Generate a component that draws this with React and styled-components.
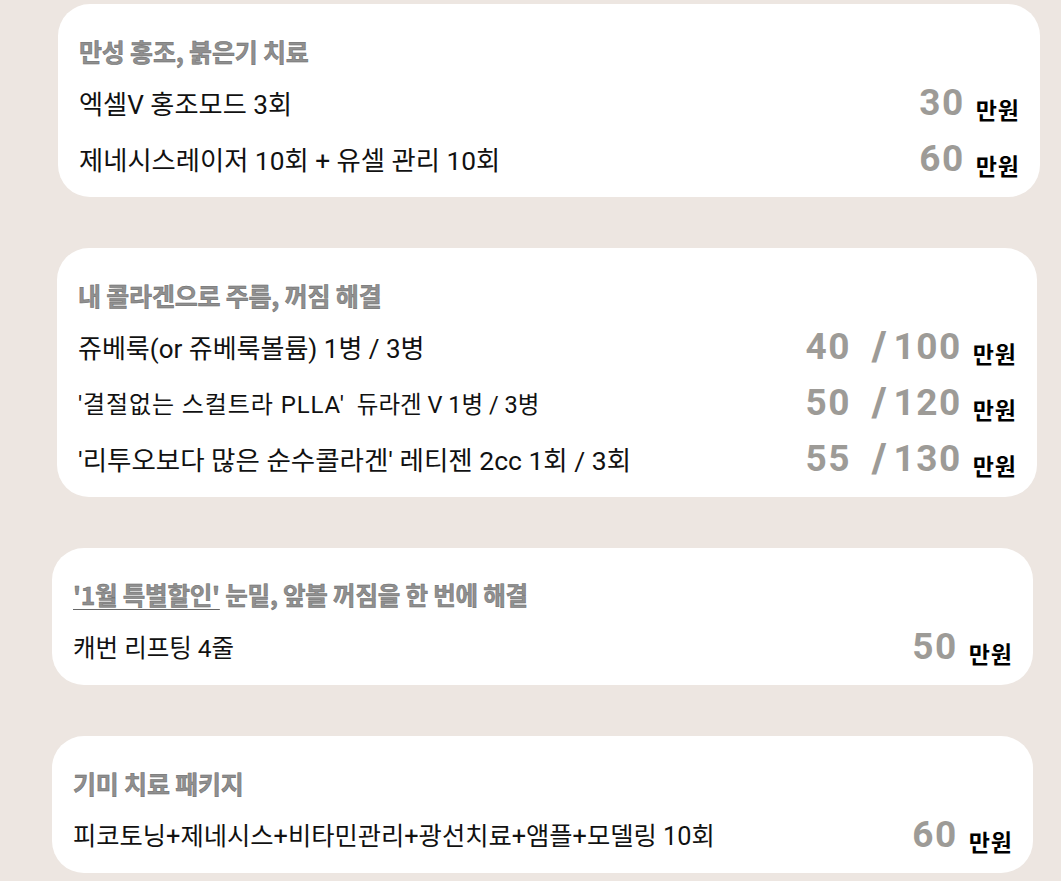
import styled, { createGlobalStyle } from "styled-components";

const GlobalStyle = createGlobalStyle`
  html, body {
    margin: 0;
    padding: 0;
    background: #ede6e1;
  }
  body {
    font-family: Roboto, "Noto Sans CJK KR", sans-serif;
  }
`;

const menus = [
  {
    title: "만성 홍조, 붉은기 치료",
    titleSize: 25,
    indent: 6,
    width: 982,
    items: [
      { name: "엑셀V 홍조모드 3회", size: 26.2, price: ["30"] },
      { name: "제네시스레이저 10회 + 유셀 관리 10회", size: 26.3, price: ["60"] },
    ],
  },
  {
    title: "내 콜라겐으로 주름, 꺼짐 해결",
    titleSize: 25,
    indent: 5,
    width: 980,
    items: [
      { name: "쥬베룩(or 쥬베룩볼륨) 1병 / 3병", size: 26, price: ["40", "100"] },
      { note: "'결절없는 스컬트라 PLLA'", name: "듀라겐 V 1병 / 3병", size: 23.5, price: ["50", "120"] },
      { name: "'리투오보다 많은 순수콜라겐' 레티젠 2cc 1회 / 3회", size: 26.5, price: ["55", "130"] },
    ],
  },
  {
    badge: "'1월 특별할인'",
    title: "눈밑, 앞볼 꺼짐을 한 번에 해결",
    titleSize: 24.5,
    indent: 0,
    width: 981,
    items: [{ name: "캐번 리프팅 4줄", size: 24.5, price: ["50"] }],
  },
  {
    title: "기미 치료 패키지",
    titleSize: 25,
    indent: 0,
    width: 981,
    items: [{ name: "피코토닝+제네시스+비타민관리+광선치료+앰플+모델링 10회", size: 25.3, price: ["60"] }],
  },
];

const App = () => {
  return (
    <>
      <GlobalStyle />
      <Page>
        {menus.map((menu, i) => (
          <Card key={i} $indent={menu.indent} $width={menu.width}>
            <Title $size={menu.titleSize}>
              {menu.badge && <Badge>{menu.badge}</Badge>}
              {menu.badge && " "}
              {menu.title}
            </Title>
            {menu.items.map((item, j) => (
              <Row key={j}>
                <ItemName>
                  {item.note && <Note>{item.note}</Note>}
                  <NameText $size={item.size}>{item.name}</NameText>
                </ItemName>
                <Price>
                  <Num>{item.price[0]}</Num>
                  {item.price[1] && (
                    <>
                      <Slash>/</Slash>
                      <Num>{item.price[1]}</Num>
                    </>
                  )}
                  <Unit>만원</Unit>
                </Price>
              </Row>
            ))}
          </Card>
        ))}
      </Page>
    </>
  );
};

export default App;

const Page = styled.div`
  display: flex;
  flex-direction: column;
  gap: 51px;
  padding: 4px 0 0 52px;
  width: 990px;
`;

const Card = styled.div`
  display: flex;
  flex-direction: column;
  box-sizing: border-box;
  width: ${(p) => p.$width}px;
  margin-left: ${(p) => p.$indent}px;
  padding: 21px 20px 8px 21px;
  background: #ffffff;
  border-radius: 32px;
`;

const Title = styled.div`
  height: 52px;
  line-height: 52px;
  font-family: "Noto Sans CJK KR", sans-serif;
  font-size: ${(p) => p.$size}px;
  font-weight: 700;
  letter-spacing: -0.2px;
  color: #909090;
  -webkit-text-stroke: 0.5px #686868;
  white-space: nowrap;
`;

const Badge = styled.span`
  text-decoration: underline;
  text-decoration-thickness: 1px;
  text-underline-offset: 4px;
`;

const Row = styled.div`
  display: flex;
  justify-content: space-between;
  align-items: flex-start;
  height: 56px;
`;

const ItemName = styled.div`
  display: flex;
  align-items: baseline;
  line-height: 56px;
  color: #111111;
  white-space: pre;
`;

const NameText = styled.span`
  font-family: Roboto, "Noto Sans CJK KR", sans-serif;
  font-size: ${(p) => p.$size}px;
`;

const Note = styled.span`
  font-family: Roboto, "Noto Sans CJK KR", sans-serif;
  font-size: 24px;
  letter-spacing: 0.9px;
  margin-right: 12px;
`;

const Price = styled.div`
  display: flex;
  align-items: flex-start;
`;

const Num = styled.span`
  font-family: Roboto, sans-serif;
  font-size: 37px;
  line-height: 51px;
  font-weight: 700;
  letter-spacing: 1.5px;
  color: #9d9b97;
`;

const Slash = styled(Num)`
  font-size: 41px;
  font-weight: 900;
  letter-spacing: 0;
  margin: 0 7px 0 21px;
`;

const Unit = styled.span`
  font-family: "Noto Sans CJK KR", sans-serif;
  font-size: 23px;
  line-height: 22px;
  font-weight: 700;
  letter-spacing: 1px;
  color: #000000;
  margin: 21px 0 0 11px;
`;
